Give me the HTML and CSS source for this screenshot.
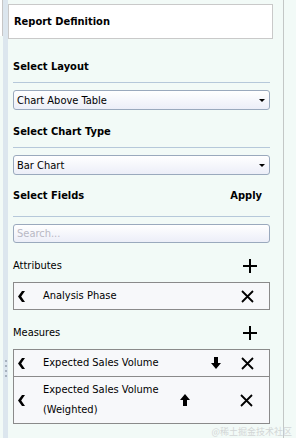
FILE: index.html
```html
<!DOCTYPE html>
<html lang="en">
<head>
    <meta charset="UTF-8">
    <title>Report Definition</title>
    <link rel="stylesheet" href="styles.css">
</head>
<body>
    <div class="layout">
        <!-- collapsed left panel + splitter -->
        <div class="left-edge">
            <div class="left-stub"></div>
        </div>
        <div class="splitter">
            <span class="grip"></span><span class="grip"></span><span class="grip"></span><span class="grip"></span>
        </div>

        <!-- report definition panel -->
        <div class="panel">
            <div class="panel-header">Report Definition</div>

            <div class="panel-body">
                <div class="section-title">Select Layout</div>
                <div class="dropdown">
                    <span>Chart Above Table</span>
                    <span class="caret"></span>
                </div>

                <div class="section-title">Select Chart Type</div>
                <div class="dropdown">
                    <span>Bar Chart</span>
                    <span class="caret"></span>
                </div>

                <div class="section-title fields-title">
                    <span>Select Fields</span>
                    <span class="apply">Apply</span>
                </div>
                <div class="search">Search...</div>

                <div class="group-title">
                    <span>Attributes</span>
                    <svg class="plus" width="14" height="14" viewBox="0 0 14 14"><path d="M7 0v14M0 7h14" stroke="#000" stroke-width="2"/></svg>
                </div>
                <div class="field-list">
                    <div class="field-row">
                        <svg class="chev" width="7" height="11" viewBox="0 0 7 11"><path d="M4 0h3L3.2 5.5 7 11H4L0 5.5z" fill="#000"/></svg>
                        <span class="field-name">Analysis Phase</span>
                        <svg class="remove" width="13" height="13" viewBox="0 0 13 13"><path d="M1 1l11 11M12 1L1 12" stroke="#000" stroke-width="1.8"/></svg>
                    </div>
                </div>

                <div class="group-title measures-title">
                    <span>Measures</span>
                    <svg class="plus" width="14" height="14" viewBox="0 0 14 14"><path d="M7 0v14M0 7h14" stroke="#000" stroke-width="2"/></svg>
                </div>
                <div class="field-list">
                    <div class="field-row">
                        <svg class="chev" width="7" height="11" viewBox="0 0 7 11"><path d="M4 0h3L3.2 5.5 7 11H4L0 5.5z" fill="#000"/></svg>
                        <span class="field-name">Expected Sales Volume</span>
                        <svg class="sort down" width="10" height="12" viewBox="0 0 10 12"><path d="M3 0h4v6h3L5 12 0 6h3z" fill="#000"/></svg>
                        <svg class="remove" width="13" height="13" viewBox="0 0 13 13"><path d="M1 1l11 11M12 1L1 12" stroke="#000" stroke-width="1.8"/></svg>
                    </div>
                    <div class="field-row tall">
                        <svg class="chev" width="7" height="11" viewBox="0 0 7 11"><path d="M4 0h3L3.2 5.5 7 11H4L0 5.5z" fill="#000"/></svg>
                        <span class="field-name narrow">Expected Sales Volume (Weighted)</span>
                        <svg class="sort up" width="10" height="12" viewBox="0 0 10 12"><path d="M3 12h4V6h3L5 0 0 6h3z" fill="#000"/></svg>
                        <svg class="remove" width="13" height="13" viewBox="0 0 13 13"><path d="M1 1l11 11M12 1L1 12" stroke="#000" stroke-width="1.8"/></svg>
                    </div>
                </div>
            </div>
        </div>
        <div class="right-edge"></div>
    </div>
    <div class="watermark">@稀土掘金技术社区</div>
</body>
</html>
```

FILE: styles.css
```css
body, html {
    margin: 0;
    padding: 0;
    height: 100%;
    overflow: hidden;
}

body {
    background-color: #f2faf7;
    font-family: "DejaVu Sans Condensed", "DejaVu Sans", sans-serif;
    font-size: 11px;
    color: #000;
    position: relative;
}

.layout {
    display: flex;
    height: 100%;
}

.left-edge {
    width: 3px;
}

.left-stub {
    height: 36px;
    background-color: #fff;
    border-right: 1px solid #c6c6c6;
    box-sizing: border-box;
}

.splitter {
    width: 5px;
    background-color: #dce6ee;
    display: flex;
    flex-direction: column;
    align-items: center;
    gap: 3px;
    padding-top: 360px;
    box-sizing: border-box;
}

.grip {
    width: 2px;
    height: 2px;
    background-color: #a7b2be;
}

.panel {
    width: 276px;
    border-right: 1px solid #c3c7c6;
    box-sizing: border-box;
}

.panel-header {
    margin: 4px 10px 0 0;
    height: 35px;
    box-sizing: border-box;
    background-color: #fff;
    border: 1px solid #c9c9c9;
    padding-left: 5px;
    display: flex;
    align-items: center;
    font-weight: bold;
}

.panel-body {
    padding: 0 13px 0 5px;
}

.section-title {
    height: 32px;
    display: flex;
    align-items: center;
    justify-content: space-between;
    font-weight: bold;
    border-bottom: 1px solid #b6c8da;
    margin-bottom: 7px;
}

.panel-header + .panel-body .section-title:first-child {
    margin-top: 11px;
}

.fields-title {
    height: 37px;
    padding-bottom: 5px;
    box-sizing: border-box;
    margin-top: 5px;
}

.apply {
    margin-right: 8px;
}

.dropdown {
    height: 20px;
    box-sizing: border-box;
    border: 1px solid #9aa9bd;
    border-radius: 3px;
    background: linear-gradient(#ffffff, #eceef8);
    display: flex;
    align-items: center;
    justify-content: space-between;
    padding: 0 3px 0 3px;
    margin-bottom: 5px;
}

.caret {
    width: 0;
    height: 0;
    border-left: 3px solid transparent;
    border-right: 3px solid transparent;
    border-top: 3px solid #000;
    margin-right: 1px;
}

.search {
    height: 19px;
    box-sizing: border-box;
    border: 1px solid #9aa9bd;
    border-radius: 3px;
    background: linear-gradient(#ffffff, #eceef8);
    color: #b8b8c4;
    padding-left: 3px;
    display: flex;
    align-items: center;
}

.group-title {
    height: 33px;
    margin-top: 6px;
    display: flex;
    align-items: center;
    justify-content: space-between;
    padding-right: 13px;
}

.measures-title {
    margin-top: 6px;
}

.field-list {
    border: 1px solid #8a8a8a;
    background-color: #f7f8fa;
}

.field-row {
    display: flex;
    align-items: center;
    height: 26px;
    padding: 0 15px 0 4px;
}

.field-row + .field-row {
    border-top: 1px solid #8a8a8a;
}

.field-row.tall {
    height: 46px;
}

.field-name {
    margin-left: 18px;
    flex: 1;
    line-height: 20px;
}

.field-name.narrow {
    flex: 0 0 120px;
}

.sort.down {
    margin-right: 20px;
}

.sort.up {
    margin-left: 17px;
    margin-right: 50px;
}

.plus, .remove, .chev, .sort {
    flex: none;
}

.watermark {
    position: absolute;
    right: 4px;
    bottom: 0;
    font-family: "Noto Sans CJK SC", sans-serif;
    font-size: 9px;
    color: #d2d6d6;
}
```
